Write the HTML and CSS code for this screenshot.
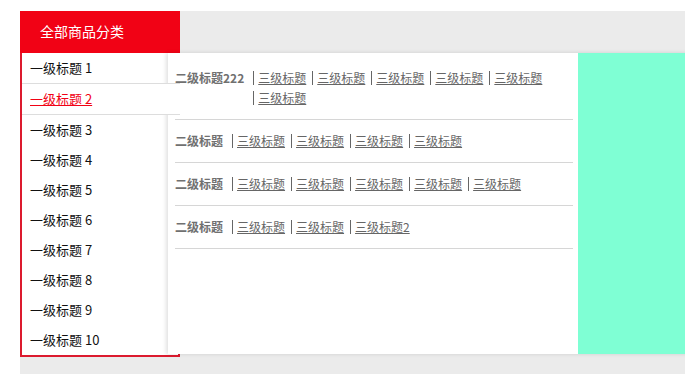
FILE: index.html
```html
<!DOCTYPE html>
<html lang="zh-CN">
<head>
    <meta charset="UTF-8">
    <title>商品分类</title>
    <link rel="stylesheet" href="styles.css">
</head>
<body>
    <div class="wrap">
        <div class="nav-head">全部商品分类</div>
        <div class="cate">
            <ul class="cate-list">
                <li><a href="#">一级标题 1</a></li>
                <li class="active"><a href="#">一级标题 2</a></li>
                <li><a href="#">一级标题 3</a></li>
                <li><a href="#">一级标题 4</a></li>
                <li><a href="#">一级标题 5</a></li>
                <li><a href="#">一级标题 6</a></li>
                <li><a href="#">一级标题 7</a></li>
                <li><a href="#">一级标题 8</a></li>
                <li><a href="#">一级标题 9</a></li>
                <li><a href="#">一级标题 10</a></li>
            </ul>
            <div class="panel">
                <div class="sub">
                    <dl>
                        <dt>二级标题222</dt>
                        <dd>
                            <a href="#">三级标题</a><a href="#">三级标题</a><a href="#">三级标题</a><a href="#">三级标题</a><a href="#">三级标题</a><a href="#">三级标题</a>
                        </dd>
                    </dl>
                    <dl>
                        <dt>二级标题</dt>
                        <dd>
                            <a href="#">三级标题</a><a href="#">三级标题</a><a href="#">三级标题</a><a href="#">三级标题</a>
                        </dd>
                    </dl>
                    <dl>
                        <dt>二级标题</dt>
                        <dd>
                            <a href="#">三级标题</a><a href="#">三级标题</a><a href="#">三级标题</a><a href="#">三级标题</a><a href="#">三级标题</a>
                        </dd>
                    </dl>
                    <dl>
                        <dt>二级标题</dt>
                        <dd>
                            <a href="#">三级标题</a><a href="#">三级标题</a><a href="#">三级标题2</a>
                        </dd>
                    </dl>
                </div>
                <div class="side"></div>
            </div>
        </div>
    </div>
</body>
</html>
```

FILE: styles.css
```css
* {
    margin: 0;
    padding: 0;
    box-sizing: border-box;
}
body {
    font-family: "Microsoft YaHei", "Noto Sans CJK SC", sans-serif;
    background-color: #fff;
    overflow: hidden;
}
ul {
    list-style: none;
}
.wrap {
    margin: 11px 0 0 20px;
    background-color: #ebebeb;
    padding-bottom: 30px;
}
.nav-head {
    width: 160px;
    height: 42px;
    line-height: 40px;
    padding-left: 20px;
    background-color: #f10215;
    color: #fff;
    font-size: 14px;
}
.cate {
    position: relative;
    width: 160px;
    background-color: #fff;
    border: 2px solid #dc1a2e;
    border-top: none;
}
.cate-list li {
    height: 30px;
    line-height: 30px;
    padding-left: 8px;
    font-size: 13px;
}
.cate-list li a {
    color: #111;
    text-decoration: none;
}
.cate-list li.active {
    position: relative;
    z-index: 3;
    height: 32px;
    line-height: 30px;
    margin-right: -2px;
    background-color: #fff;
    border-top: 1px solid #ddd;
    border-bottom: 1px solid #ddd;
}
.cate-list li.active a {
    color: #f10215;
    text-decoration: underline;
}
.panel {
    position: absolute;
    left: 146px;
    top: 0;
    z-index: 2;
    width: 530px;
    height: 301px;
    display: flex;
    box-shadow: -2px 0 4px rgba(0, 0, 0, 0.12);
}
.sub {
    width: 410px;
    background-color: #fff;
    padding: 4px 5px 0 7px;
}
.side {
    flex: 1;
    background-color: #7fffd4;
}
.sub dl {
    display: flex;
    padding: 11px 0;
    border-bottom: 1px solid #d6d6d6;
    font-size: 12px;
    line-height: 20px;
}
.sub dt {
    font-weight: bold;
    color: #707070;
    padding-right: 9px;
    white-space: nowrap;
}
.sub dd {
    flex: 1;
}
.sub dd a {
    display: inline-block;
    color: #666;
    line-height: 14px;
    padding: 0 6px 0 4px;
    margin: 3px 0;
    border-left: 1px solid #666;
}
```
